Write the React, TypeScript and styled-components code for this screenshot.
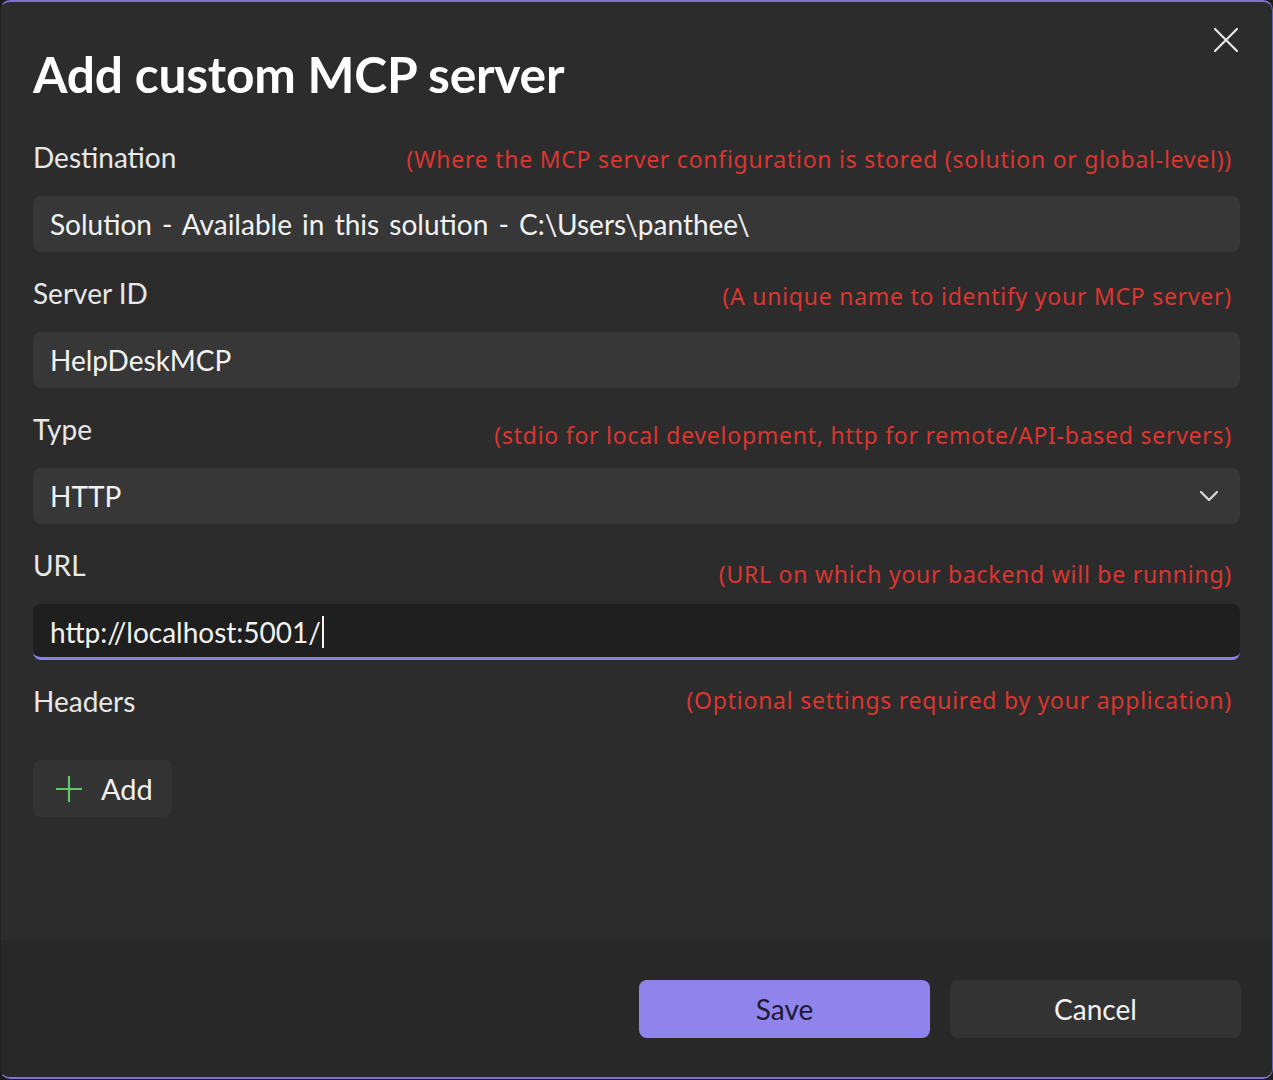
import * as React from "react";
import styled, { createGlobalStyle } from "styled-components";

const GlobalStyle = createGlobalStyle`
  html, body {
    margin: 0;
    padding: 0;
    background: #1c1c1c;
  }
  * {
    box-sizing: border-box;
  }
`;

type Field = {
  label: string;
  hint: string;
  hintShift: number;
  value: string;
  kind: "plain" | "select" | "focused";
};

const fields: Field[] = [
  {
    label: "Destination",
    hint: "(Where the MCP server configuration is stored (solution or global-level))",
    hintShift: 4,
    value: "Solution - Available in this solution - C:\\Users\\panthee\\",
    kind: "plain",
  },
  {
    label: "Server ID",
    hint: "(A unique name to identify your MCP server)",
    hintShift: 6,
    value: "HelpDeskMCP",
    kind: "plain",
  },
  {
    label: "Type",
    hint: "(stdio for local development, http for remote/API-based servers)",
    hintShift: 12,
    value: "HTTP",
    kind: "select",
  },
  {
    label: "URL",
    hint: "(URL on which your backend will be running)",
    hintShift: 18,
    value: "http://localhost:5001/",
    kind: "focused",
  },
];

const App: React.FC = () => {
  return (
    <>
      <GlobalStyle />
      <Dialog>
        <Body>
          <TitleRow>
            <Title>Add custom MCP server</Title>
            <CloseButton aria-label="Close">
              <svg width="26" height="26" viewBox="0 0 26 26">
                <path d="M2 2 L24 24 M24 2 L2 24" stroke="#e8e8e8" strokeWidth="2.2" strokeLinecap="round" />
              </svg>
            </CloseButton>
          </TitleRow>

          {fields.map((f) => (
            <FieldGroup key={f.label}>
              <LabelRow>
                <Label>{f.label}</Label>
                <Hint $shift={f.hintShift}>{f.hint}</Hint>
              </LabelRow>
              <InputBox $focused={f.kind === "focused"}>
                <InputText>{f.value}</InputText>
                {f.kind === "focused" && <Caret />}
                {f.kind === "select" && (
                  <Chevron>
                    <svg width="22" height="14" viewBox="0 0 22 14">
                      <path d="M3 3 L11 11 L19 3" fill="none" stroke="#dcdcdc" strokeWidth="2.2" strokeLinecap="round" strokeLinejoin="round" />
                    </svg>
                  </Chevron>
                )}
              </InputBox>
            </FieldGroup>
          ))}

          <LabelRow>
            <Label>Headers</Label>
            <Hint $shift={-2}>(Optional settings required by your application)</Hint>
          </LabelRow>

          <AddButton>
            <svg width="28" height="28" viewBox="0 0 28 28">
              <path d="M14 1 V27 M1 14 H27" stroke="#5fc86a" strokeWidth="2.2" />
            </svg>
            <span>Add</span>
          </AddButton>
        </Body>

        <Footer>
          <ActionButton $primary>Save</ActionButton>
          <ActionButton>Cancel</ActionButton>
        </Footer>
      </Dialog>
    </>
  );
};

export default App;

const Dialog = styled.div`
  width: 1273px;
  height: 1079px;
  display: flex;
  flex-direction: column;
  background: #2c2c2c;
  border-top: 2px solid #7f72cf;
  border-bottom: 2px solid #7f72cf;
  border-left: 1px solid #232323;
  border-right: 1px solid #6a5fb0;
  border-radius: 10px;
  overflow: hidden;
  font-family: "Segoe UI", "Lato", "Noto Sans", sans-serif;
  color: #ececec;
`;

const Body = styled.div`
  flex: 1;
  padding: 44px 32px 0 32px;
  display: flex;
  flex-direction: column;
  align-items: stretch;
`;

const TitleRow = styled.div`
  display: flex;
  justify-content: space-between;
  align-items: center;
  height: 56px;
  margin-bottom: 32px;
`;

const Title = styled.h1`
  margin: 0;
  font-size: 49.7px;
  font-weight: 700;
  color: #ffffff;
  letter-spacing: -0.2px;
`;

const CloseButton = styled.button`
  align-self: flex-start;
  margin-top: -23px;
  margin-right: -3px;
  background: none;
  border: none;
  padding: 4px;
  display: flex;
`;

const FieldGroup = styled.div`
  display: flex;
  flex-direction: column;
  margin-bottom: 18px;
`;

const LabelRow = styled.div`
  display: flex;
  justify-content: space-between;
  align-items: center;
  height: 46px;
  margin-bottom: 16px;
  padding-right: 8px;
`;

const Label = styled.span`
  font-size: 28px;
  color: #e8e8e8;
`;

const Hint = styled.span<{ $shift: number }>`
  font-family: "Noto Sans", "Open Sans", sans-serif;
  font-size: 23px;
  letter-spacing: 0.75px;
  color: #dd3530;
  margin-top: ${(p) => p.$shift}px;
`;

const InputBox = styled.div<{ $focused?: boolean }>`
  height: 56px;
  display: flex;
  align-items: center;
  padding: 0 17px;
  border-radius: 8px;
  background: ${(p) => (p.$focused ? "#1f1f1f" : "#373737")};
  border-bottom: ${(p) => (p.$focused ? "3px solid #8d80e4" : "none")};
  padding-top: ${(p) => (p.$focused ? "3px" : "0")};
`;

const InputText = styled.span`
  font-size: 28px;
  word-spacing: 3px;
  color: #f2f2f2;
`;

const Caret = styled.span`
  display: inline-block;
  width: 2px;
  height: 32px;
  margin-left: 1px;
  background: #f5f5f5;
`;

const Chevron = styled.span`
  margin-left: auto;
  margin-right: 3px;
  display: flex;
`;

const AddButton = styled.button`
  align-self: flex-start;
  margin-top: 20px;
  height: 57px;
  padding: 0 19px 0 22px;
  display: flex;
  align-items: center;
  gap: 18px;
  background: #333333;
  border: none;
  border-radius: 8px;
  font-family: inherit;
  font-size: 29px;
  color: #f0f0f0;
`;

const Footer = styled.div`
  display: flex;
  justify-content: flex-end;
  gap: 20px;
  padding: 40px 31px 39px 32px;
  background: #282828;
`;

const ActionButton = styled.button<{ $primary?: boolean }>`
  width: 291px;
  height: 58px;
  border-radius: 8px;
  border: none;
  font-family: inherit;
  font-size: 28px;
  background: ${(p) => (p.$primary ? "#9183ec" : "#333333")};
  color: ${(p) => (p.$primary ? "#1d1b36" : "#f2f2f2")};
`;
